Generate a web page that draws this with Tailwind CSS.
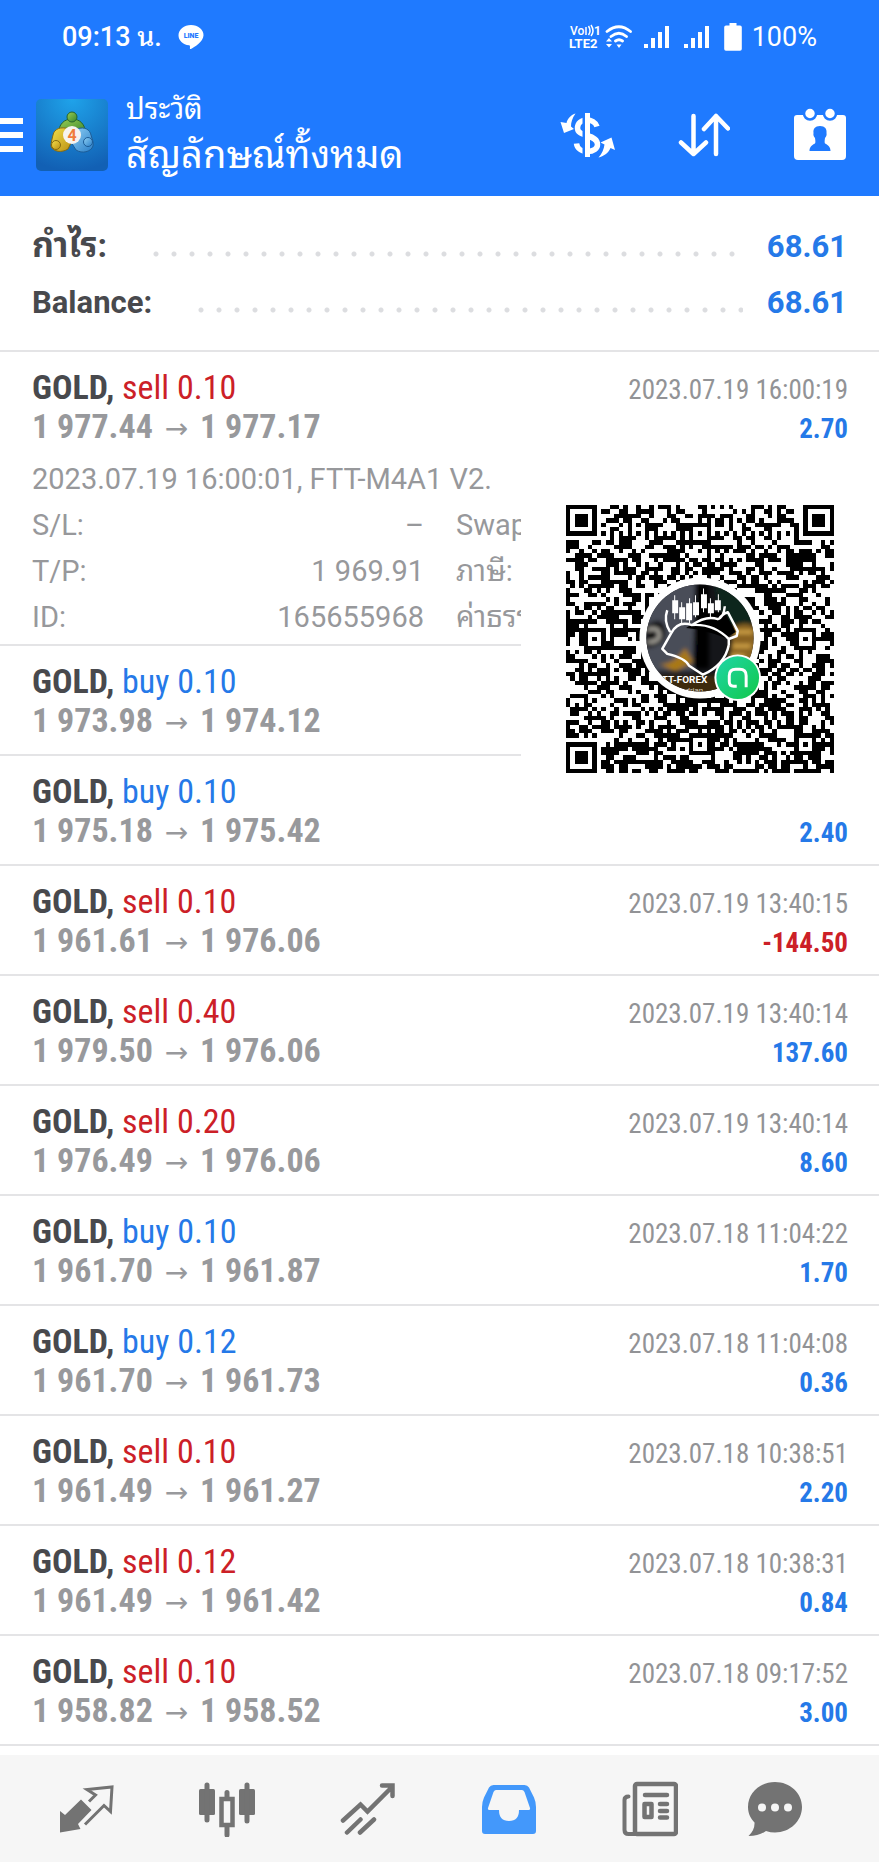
<!DOCTYPE html>
<html lang="th">
<head>
    <meta charset="UTF-8">
    <meta name="viewport" content="width=device-width, initial-scale=1.0">
    <title>ประวัติ</title>
    <!-- Tailwind CSS -->
    <script src="https://cdn.jsdelivr.net/npm/@tailwindcss/browser@4"></script>
</head>
<body class="bg-white font-[Roboto,'Noto_Sans_Thai_Looped',Loma,'Noto_Sans_Thai','Noto_Sans',sans-serif] text-[#48494d]">
    <div class="min-h-screen flex flex-col">
        <header class="bg-[#1f7aff] text-white">
            <!-- Status bar -->
            <div class="h-[73px] flex items-center justify-between pl-[62px] pr-[62px] text-[27px] leading-8">
                <div class="flex items-center gap-4">
                    <span class="font-medium">09:13 น.</span>
                    <svg class="w-[26px] h-[26px]" viewBox="0 0 26 26">
                        <path fill="#fff" d="M13 1C6 1 .5 5.500.5 11.200c0 5.200 4.500 9.400 10.500 10.100 1.300.2 1 1.300.9 3.200 0 .6.4.7 1 .4 3-1.500 12.600-7.300 12.600-13.700C25.500 5.500 20 1 13 1z"/>
                        <text x="13" y="14" text-anchor="middle" font-size="7" font-weight="900" fill="#1f7aff">LINE</text>
                    </svg>
                </div>
                <div class="flex items-center">
                    <svg class="w-[32px] h-[26px]" viewBox="0 0 32 26" fill="#fff">
                        <text x="1" y="11" font-size="12" font-weight="500">Vo</text>
                        <path d="M17 3v8M19.500 2q3 5 0 9M22 1q4 6 0 11" fill="none" stroke="#fff" stroke-width="1.500"/>
                        <text x="25" y="11" font-size="12" font-weight="700">1</text>
                        <text x="0" y="24" font-size="13" font-weight="700">LTE2</text>
                    </svg>
                    <svg class="w-[27px] h-[26px] ml-1" viewBox="0 0 27 26" fill="none" stroke="#fff" stroke-width="2.800" stroke-linecap="round">
                        <path d="M2 7.500Q14 -2 25.500 7.500M6 12.500Q14 6 21.500 12.500M10.500 17q3.500-2.500 7 0"/>
                        <path d="M11.500 20.500h5L14 24zM1 17.500h6L4 14zM1 20h6l-3 3.500z" fill="#fff" stroke="none"/>
                    </svg>
                    <svg class="w-[26px] h-[26px] ml-3" viewBox="0 0 26 26" fill="#fff">
                        <path d="M0 20h4v4H0zM7 14h4v10H7zM14 8h4v16h-4zM21 2h4v22h-4z"/>
                    </svg>
                    <svg class="w-[26px] h-[26px] ml-3.5" viewBox="0 0 26 26" fill="#fff">
                        <path d="M0 20h4v4H0zM7 14h4v10H7zM14 8h4v16h-4zM21 2h4v22h-4z"/>
                    </svg>
                    <svg class="w-[18px] h-[30px] ml-3.5" viewBox="0 0 18 30" fill="#fff">
                        <path d="M5.500 1h7v2.500H16a1.800 1.800 0 0 1 1.800 1.800V27A1.800 1.800 0 0 1 16 28.800H2A1.800 1.800 0 0 1 .2 27V5.300A1.800 1.800 0 0 1 2 3.500h3.500z"/>
                    </svg>
                    <span class="ml-2.5">100%</span>
                </div>
            </div>

            <!-- App bar -->
            <div class="h-[123px] flex items-center pr-8">
                <button type="button" aria-label="เมนู" class="w-[23px] h-[34px] flex flex-col justify-between">
                    <span class="w-full h-[6px] bg-white"></span>
                    <span class="w-full h-[6px] bg-white"></span>
                    <span class="w-full h-[6px] bg-white"></span>
                </button>
                <svg class="w-[72px] h-[72px] ml-[13px]" viewBox="0 0 72 72">
                    <defs>
                        <radialGradient id="tile" cx=".5" cy="0" r="1">
                            <stop offset="0" stop-color="#1fa3ea"/>
                            <stop offset="1" stop-color="#1260b4"/>
                        </radialGradient>
                        <linearGradient id="green" x1="0" y1="0" x2="1" y2="1">
                            <stop offset="0" stop-color="#9ccf52"/>
                            <stop offset="1" stop-color="#35852f"/>
                        </linearGradient>
                        <linearGradient id="yellow" x1="0" y1="0" x2="1" y2="1">
                            <stop offset="0" stop-color="#f5e04a"/>
                            <stop offset="1" stop-color="#b98f12"/>
                        </linearGradient>
                        <linearGradient id="sky" x1="0" y1="0" x2="1" y2="1">
                            <stop offset="0" stop-color="#8fd0f5"/>
                            <stop offset="1" stop-color="#2a7fc9"/>
                        </linearGradient>
                    </defs>
                    <rect width="72" height="72" rx="5" fill="url(#tile)"/>
                    <path d="M22 35c1-10 6-15 14-15s13 5 14 15z" fill="url(#green)" stroke="#24632c" stroke-width="1"/>
                    <path d="M33 30c-8-3-15 0-16 6-1 4-2 8-2 11 2 6 11 7 17 3l4-8z" fill="url(#yellow)" stroke="#84690f" stroke-width="1"/>
                    <path d="M41 30c8-3 13 1 14 6 1 4 3 8 2 11-2 6-11 8-17 4l-5-8z" fill="url(#sky)" stroke="#1c5c97" stroke-width="1"/>
                    <circle cx="36" cy="18" r="5" fill="url(#green)" stroke="#24632c"/>
                    <circle cx="20" cy="46" r="4.500" fill="url(#yellow)" stroke="#84690f"/>
                    <circle cx="52" cy="43" r="4.500" fill="url(#sky)" stroke="#1c5c97"/>
                    <circle cx="36" cy="36" r="9" fill="#f6f3ef"/>
                    <text x="36" y="42" text-anchor="middle" font-size="16" font-weight="700" fill="#f07c3c">4</text>
                </svg>
                <div class="flex-1 ml-[18px]">
                    <p class="text-[29px] leading-10">ประวัติ</p>
                    <h1 class="text-[38px] leading-[52px] whitespace-nowrap">สัญลักษณ์ทั้งหมด</h1>
                </div>
                <div class="flex items-center gap-[63px]">
                    <button type="button" aria-label="สกุลเงิน">
                        <svg class="w-[55px] h-[54px]" viewBox="0 0 55 54" fill="none" stroke="#fff">
                            <path d="M37 18.500C35.500 14 31 12 27 12c-6 0-9.500 3.500-9.500 8s3.500 5.500 9.500 7.500c6.500 2 10.500 4 10.500 9 0 4-4 7-10 7-6.500 0-10.500-3.500-11-8" stroke-width="5.500"/>
                            <path d="M24 4v47" stroke="#1f7aff" stroke-width="3"/>
                            <path d="M27.500 5v44" stroke-width="5"/>
                            <path d="M15.500 5.500c-4 1-8 5-9 9.500L.5 14l3.500 11 10-4-3-2.500c0-4 1-8 4.500-13z" fill="#fff" stroke="none"/>
                            <path d="M38.500 49.500c5-1 10-4.500 12-9.500l4.500 2-3.500-12.500-11 5 4 2c-.5 4.500-2.500 9-6 13z" fill="#fff" stroke="none"/>
                        </svg>
                    </button>
                    <button type="button" aria-label="เรียงลำดับ">
                        <svg class="w-[52px] h-[54px]" viewBox="0 0 52 54" fill="none" stroke="#fff" stroke-width="4.500" stroke-linecap="round" stroke-linejoin="round">
                            <path d="M15.500 8v38M3 34.500L15.500 46 28 34.500M38 46V8M26 21L38 8l12 12.500"/>
                        </svg>
                    </button>
                    <button type="button" aria-label="เลือกช่วงเวลา">
                        <svg class="w-[54px] h-[54px]" viewBox="0 0 54 54">
                            <path d="M4 7h46a3 3 0 0 1 3 3v38a4 4 0 0 1-4 4H5a4 4 0 0 1-4-4V10a3 3 0 0 1 3-3z" fill="#fff"/>
                            <circle cx="17" cy="5.500" r="6" fill="#fff" stroke="#1f7aff" stroke-width="2.500"/>
                            <circle cx="37" cy="5.500" r="6" fill="#fff" stroke="#1f7aff" stroke-width="2.500"/>
                            <path d="M27 18c5 0 7 3 6.500 7 .5 2-.5 4-1.500 5-.5 3-.5 4.500 0 5.500 3 1.500 5.500 3.500 5.500 7.500h-21c0-4 2.500-6 5.500-7.500.5-1 .5-2.500 0-5.500-1-1-2-3-1.500-5-.5-4 1.500-7 6.500-7z" fill="#1f7aff"/>
                        </svg>
                    </button>
                </div>
            </div>
        </header>

        <!-- Totals -->
        <dl class="pt-5 pb-[18px] border-b-2 border-[#e4e4e6] px-8 text-[31px] leading-[58px] font-bold">
            <div class="flex items-baseline h-[58px]">
                <dt class="text-[34px]">กำไร:</dt>
                <span class="flex-1 h-[6px] ml-10 mr-6 bg-[radial-gradient(circle,#dcdde0_2px,transparent_3px)] bg-[length:18px_6px]"></span>
                <dd class="text-[#2579e8]">68.61</dd>
            </div>
            <div class="flex items-baseline h-[58px]">
                <dt>Balance:</dt>
                <span class="flex-1 h-[6px] ml-10 mr-6 bg-[radial-gradient(circle,#dcdde0_2px,transparent_3px)] bg-[length:18px_6px]"></span>
                <dd class="text-[#2579e8]">68.61</dd>
            </div>
        </dl>

        <!-- Deals -->
        <main class="relative flex-1">
            <ul id="deals"></ul>

            <!-- QR card over the list -->
            <div class="absolute right-0 top-[98px] w-[358px] h-[362px] bg-white pl-[45px] pt-[55px]">
                <svg class="w-[268px] h-[268px]" viewBox="0 0 270 270" role="img" aria-label="QR code">
                    <defs>
                        <clipPath id="photo"><circle cx="135" cy="134" r="54"/></clipPath>
                        <linearGradient id="badge" x1="0" y1="0" x2="1" y2="1">
                            <stop offset="0" stop-color="#1fd6a8"/>
                            <stop offset="1" stop-color="#12c84a"/>
                        </linearGradient>
                        <filter id="soft"><feGaussianBlur stdDeviation="2"/></filter>
                    </defs>
                    <path id="modules" fill="#000" shape-rendering="crispEdges"/>
                    <circle cx="135" cy="134" r="61" fill="#fff"/>
                    <g clip-path="url(#photo)">
                        <rect x="80" y="79" width="110" height="110" fill="#15161a"/>
                        <g filter="url(#soft)">
                            <rect x="78" y="78" width="52" height="90" fill="#4a4d59"/>
                            <path d="M80 122q18-12 20 4t-20 18z" fill="#111"/>
                            <path d="M82 126q11-4 12 4t-12 8" fill="none" stroke="#b9b6ad" stroke-width="3"/>
                            <path d="M94 160q14 2 26-16l8 14-18 10z" fill="#a97818"/>
                            <path d="M150 80h40v40l-30 6z" fill="#10281f"/>
                            <path d="M168 124q12-8 24 0v34q-16 8-28-2z" fill="#8a6420"/>
                            <path d="M170 128h18M168 142h18M166 152h14" stroke="#e0b04e" stroke-width="3"/>
                            <path d="M130 80h14v85h-16z" fill="#000"/>
                            <path d="M84 172h100v20H84z" fill="#3c2a10"/>
                        </g>
                        <path d="M135 114q14-10 26-4l10 18-10 6q-20-8-40-10z" fill="#000"/>
                        <g fill="#fff">
                            <path d="M107 96h6v13h-6zM114 103h6v12h-6zM121 99h6v17h-6zM128 98h6v13h-6zM136 90h6v14h-6zM143 99h6v10h-6zM150 96h6v10h-6z"/>
                            <path d="M109 91h1v24h-1zM116 98h1v22h-1zM124 94h1v25h-1zM130 91h1v22h-1zM138 84h1v24h-1zM145 94h1v20h-1zM153 90h1v18h-1z"/>
                        </g>
                        <path d="M105 128q-7-11-3-22M106 129q7-13 21-8 14-10 26-6 6-2 7-13M106 129l-9 16 5 5q18 4 22 12l14 9q22-10 26-30M126 121q22-2 38 14v6M164 135l8-3 1-5-10-19q-6 2-9 7" fill="none" stroke="#fff" stroke-width="2.500" stroke-linejoin="round"/>
                        <text x="91" y="179" font-size="10" font-weight="700" fill="#fff">FTT-FOREX</text>
                        <text x="114" y="189" font-size="8" fill="#d9cfbd">indrian</text>
                    </g>
                    <circle cx="173" cy="174" r="23.500" fill="#fff"/>
                    <circle cx="173" cy="174" r="21.500" fill="url(#badge)"/>
                    <path d="M172 182.500h-3q-4.500 0-4.500-4.500v-6q0-6.500 6.500-6.500h4q6.500 0 6.500 6.500v11.500" fill="none" stroke="#fff" stroke-width="3"/>
                </svg>
            </div>
        </main>

        <!-- Bottom navigation -->
        <nav class="h-[107px] bg-[#f6f6f6] grid grid-cols-[repeat(5,141fr)_109fr] items-center justify-items-center pl-4 pr-[50px] text-[#737373]">
            <a href="#quotes" aria-label="ราคา">
                <svg class="w-14 h-14" viewBox="0 0 56 56" fill="none">
                    <path d="M23 18.500L33.500 29 20 43l2.500 5L2 51.500V30l5 4z" fill="currentColor"/>
                    <path d="M31 20.500L37.500 14 29 8.500 54 6 52.500 30.500 46 24.500 27 43.500" stroke="#f6f6f6" stroke-width="6"/>
                    <path d="M31 20.500L37.500 14 29 8.500 54 6 52.500 30.500 46 24.500 27 43.500" stroke="currentColor" stroke-width="3"/>
                </svg>
            </a>
            <a href="#charts" aria-label="กราฟ">
                <svg class="w-14 h-14" viewBox="0 0 56 56" fill="currentColor">
                    <rect x="0" y="8" width="16" height="26" rx="1.500"/>
                    <rect x="40" y="8" width="16" height="26" rx="1.500"/>
                    <path d="M8 4v35M48 4v36M28 11.500v8M28 43v11" stroke="currentColor" stroke-width="5" stroke-linecap="round"/>
                    <rect x="22.500" y="18" width="11" height="26" fill="#f6f6f6" stroke="currentColor" stroke-width="4.500"/>
                </svg>
            </a>
            <a href="#trade" aria-label="เทรด">
                <svg class="w-14 h-14" viewBox="0 0 56 56" fill="none" stroke="currentColor" stroke-width="4.500" stroke-linecap="round">
                    <path d="M3 39.500L20.500 23.500l7 7L52 6M42 4.500H52.500V15M7 51.500L20.500 38.500M20 51.500L34 38.500"/>
                </svg>
            </a>
            <a href="#history" aria-label="ประวัติ" aria-current="page">
                <svg class="w-14 h-14" viewBox="0 0 56 56">
                    <path fill="#4398fb" fill-rule="evenodd" d="M12.500 4h31q3 0 4.500 2.500l5 10Q55 21 55 26v24q0 3-3 3H4q-3 0-3-3V26q0-5 2-9.500l5-10Q9.500 4 12.500 4zM15 9q-1.500 0-2.500 2L7 27q-.5 2 1.500 2H18q0 11 10 11t10-11h9.500q2 0 1.500-2l-5.500-16q-1-2-2.500-2z"/>
                </svg>
            </a>
            <a href="#news" aria-label="ข่าว">
                <svg class="w-14 h-14" viewBox="0 0 56 56" fill="none" stroke="currentColor" stroke-width="4.500" stroke-linecap="round" stroke-linejoin="round">
                    <rect x="13" y="3" width="41" height="50" rx="2"/>
                    <path d="M6.500 15.500q-4 0-4 3.500v30q0 4 4 4H16" stroke-width="4"/>
                    <path d="M23 14h22M38 23h7M38 30h7M38 36.500h7" stroke-width="4.500"/>
                    <rect x="22.500" y="23" width="7" height="13"/>
                </svg>
            </a>
            <a href="#messages" aria-label="ข้อความ">
                <svg class="w-14 h-14" viewBox="0 0 56 56">
                    <path fill="currentColor" d="M28 1C13 1 1 12 1 26c0 7 3 11.500 6.500 15.500Q8 49 1.500 55q11 0 17.500-5 4.500 1.500 9 1.500c15 0 27-11.500 27-25.500S43 1 28 1z"/>
                    <circle cx="15" cy="26.500" r="4" fill="#f6f6f6"/>
                    <circle cx="28" cy="26.500" r="4" fill="#f6f6f6"/>
                    <circle cx="41" cy="26.500" r="4" fill="#f6f6f6"/>
                </svg>
            </a>
        </nav>
    </div>

    <script>
        const deals = [
            { side: 'sell', lots: '0.10', open: '1 977.44', close: '1 977.17', time: '2023.07.19 16:00:19', profit: '2.70', details: true },
            { side: 'buy', lots: '0.10', open: '1 973.98', close: '1 974.12', time: '', profit: '' },
            { side: 'buy', lots: '0.10', open: '1 975.18', close: '1 975.42', time: '', profit: '2.40' },
            { side: 'sell', lots: '0.10', open: '1 961.61', close: '1 976.06', time: '2023.07.19 13:40:15', profit: '-144.50' },
            { side: 'sell', lots: '0.40', open: '1 979.50', close: '1 976.06', time: '2023.07.19 13:40:14', profit: '137.60' },
            { side: 'sell', lots: '0.20', open: '1 976.49', close: '1 976.06', time: '2023.07.19 13:40:14', profit: '8.60' },
            { side: 'buy', lots: '0.10', open: '1 961.70', close: '1 961.87', time: '2023.07.18 11:04:22', profit: '1.70' },
            { side: 'buy', lots: '0.12', open: '1 961.70', close: '1 961.73', time: '2023.07.18 11:04:08', profit: '0.36' },
            { side: 'sell', lots: '0.10', open: '1 961.49', close: '1 961.27', time: '2023.07.18 10:38:51', profit: '2.20' },
            { side: 'sell', lots: '0.12', open: '1 961.49', close: '1 961.42', time: '2023.07.18 10:38:31', profit: '0.84' },
            { side: 'sell', lots: '0.10', open: '1 958.82', close: '1 958.52', time: '2023.07.18 09:17:52', profit: '3.00' },
        ];

        const details = `
            <div class="mt-2.5 -mb-2.5 font-[Roboto,'Noto_Sans_Thai_Looped',Loma,'Noto_Sans_Thai',sans-serif] text-[29px] leading-[46px] text-[#97989b]">
                <p>2023.07.19 16:00:01, FTT-M4A1 V2.</p>
                <div class="grid grid-cols-2 gap-x-8">
                    <dl>
                        <div class="flex justify-between"><dt>S/L:</dt><dd>–</dd></div>
                        <div class="flex justify-between"><dt>T/P:</dt><dd>1 969.91</dd></div>
                        <div class="flex justify-between"><dt>ID:</dt><dd>165655968</dd></div>
                    </dl>
                    <dl>
                        <dt class="h-[46px]">Swap:</dt>
                        <dt class="h-[46px]">ภาษี:</dt>
                        <dt class="h-[46px]">ค่าธรรมเนียม:</dt>
                    </dl>
                </div>
            </div>`;

        document.getElementById('deals').innerHTML = deals.map((d) => `
            <li class="pt-4 pb-3.5 pl-8 pr-[31px] border-b-2 border-[#e4e4e6] font-['Roboto_Condensed','Liberation_Sans_Narrow',Roboto,sans-serif]">
                <div class="flex items-baseline justify-between h-[39px] leading-[39px]">
                    <p class="text-[34px]"><b class="font-bold">GOLD,</b> <span class="${d.side === 'buy' ? 'text-[#2579e8]' : 'text-[#cc2027]'}">${d.side} ${d.lots}</span></p>
                    <time class="text-[27px] text-[#929396]">${d.time}</time>
                </div>
                <div class="flex items-baseline justify-between h-[39px] leading-[39px] font-bold">
                    <p class="text-[34px] text-[#98999c]">${d.open} <span class="mx-1 font-['DejaVu_Sans'] text-[28px] leading-none font-normal">→</span> ${d.close}</p>
                    <p class="text-[27px] ${d.profit.startsWith('-') ? 'text-[#cc2027]' : 'text-[#2579e8]'}">${d.profit}</p>
                </div>
                ${d.details ? details : ''}
            </li>`).join('');

        // QR modules: finder, alignment and timing marks, the rest from a seeded sequence
        const size = 61;
        const unit = 270 / size;
        let seed = 20230719;

        function nextBit() {
            seed = (seed * 1103515245 + 12345) % 2147483648;
            return seed / 2147483648 < 0.54;
        }

        function ring(x, y, cx, cy, radius) {
            const dist = Math.max(Math.abs(x - cx), Math.abs(y - cy));
            return dist <= radius ? dist : -1;
        }

        function isDark(x, y) {
            const bit = nextBit();
            for (const [cx, cy] of [[3, 3], [57, 3], [3, 57]]) {
                const r = ring(x, y, cx, cy, 4);
                if (r >= 0) return r !== 2 && r !== 4;
            }
            for (const [cx, cy] of [[30, 6], [6, 30], [30, 30], [54, 30], [30, 54], [54, 54]]) {
                const r = ring(x, y, cx, cy, 2);
                if (r >= 0) return r !== 1;
            }
            if (x === 6 || y === 6) return (x + y) % 2 === 0;
            return bit;
        }

        let path = '';
        for (let y = 0; y < size; y++) {
            for (let x = 0; x < size; x++) {
                if (isDark(x, y)) path += `M${x * unit} ${y * unit}h${unit}v${unit}h-${unit}z`;
            }
        }
        document.getElementById('modules').setAttribute('d', path);
    </script>
</body>
</html>
